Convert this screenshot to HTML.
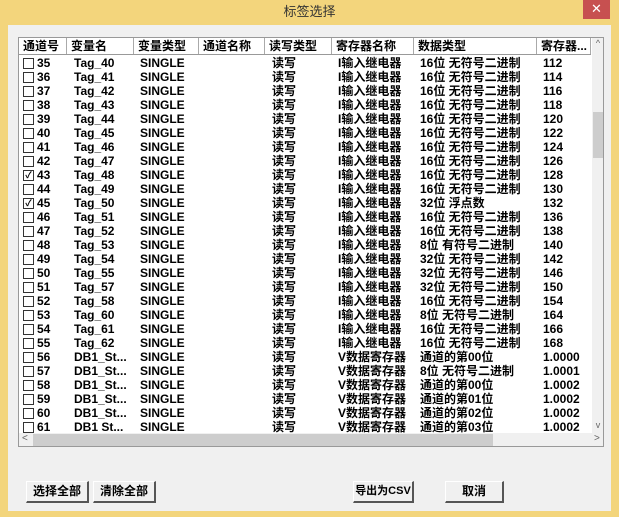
<!DOCTYPE html><html><head><meta charset="utf-8"><style>
body{margin:0;width:619px;height:517px;background:#f3d57c;font-family:"Liberation Sans","WenQuanYi Zen Hei","Noto Sans CJK SC",sans-serif;position:relative;overflow:hidden}
.title{position:absolute;left:0;top:0;width:619px;height:25px;text-align:center;line-height:24px;font-size:13px;color:#333}
.close{position:absolute;right:9px;top:0;width:27px;height:19px;background:#c75050;color:#fff;text-align:center;line-height:18px;font-size:13px}
.client{position:absolute;left:8px;top:25px;width:603px;height:486px;background:#f0f0f0}
.grid{position:absolute;left:18px;top:37px;width:586px;height:410px;background:#fff;border:1px solid #999;box-sizing:border-box;overflow:hidden}
.r{position:absolute;left:0;height:14px;font-size:12px;font-weight:bold;line-height:14px;white-space:nowrap;color:#000}
.r span{position:absolute;top:0}
.hd{top:0;height:16px;line-height:16px;width:572px;border-bottom:1px solid #999}
.hd span{height:16px;border-right:1px solid #aaa;padding-left:4px;box-sizing:border-box}
.cb{position:absolute;left:0;top:2px;width:9px;height:9px;border:1px solid #333;font-size:9px;line-height:9px;text-align:center;font-style:normal;overflow:hidden}
.vs{position:absolute;left:573px;top:0;width:12px;height:395px;background:#f0f0f0}
.th{position:absolute;left:1px;top:74px;width:11px;height:46px;background:#cdcdcd}
.hs{position:absolute;left:0;top:395px;width:585px;height:14px;background:#f0f0f0}
.hth{position:absolute;left:14px;top:1px;width:460px;height:12px;background:#cdcdcd}
.btn{position:absolute;top:481px;height:22px;background:#f0f0f0;border:1px solid #fff;border-right:2px solid #555;border-bottom:2px solid #555;box-sizing:border-box;font-size:12px;font-weight:bold;text-align:center;line-height:19px;white-space:nowrap}
</style></head><body>
<div class="title">标签选择</div><div class="close">✕</div>
<div class="client"></div>
<div class="grid">
<div class="r hd"><span style="left:0;width:48px">通道号</span><span style="left:48px;width:67px">变量名</span><span style="left:115px;width:65px">变量类型</span><span style="left:180px;width:66px">通道名称</span><span style="left:246px;width:67px">读写类型</span><span style="left:313px;width:82px">寄存器名称</span><span style="left:395px;width:123px">数据类型</span><span style="left:518px;width:54px">寄存器...</span></div>
<div id="rows"></div>
<div class="vs"><div style="font-size:9px;text-align:center;color:#666">^</div><div class="th"></div><div style="position:absolute;top:382px;width:12px;font-size:9px;text-align:center;color:#666">v</div></div>
<div class="hs"><span style="position:absolute;left:3px;font-size:10px;color:#666">&lt;</span><div class="hth"></div><span style="position:absolute;left:575px;font-size:10px;color:#666">&gt;</span></div>
</div>
<div class="btn" style="left:26px;width:63px">选择全部</div>
<div class="btn" style="left:93px;width:63px">清除全部</div>
<div class="btn" style="left:353px;width:61px;font-size:11px">导出为CSV</div>
<div class="btn" style="left:445px;width:59px">取消</div>
<script>
var d=[[35,"Tag_40","I","16位 无符号二进制","112"],[36,"Tag_41","I","16位 无符号二进制","114"],[37,"Tag_42","I","16位 无符号二进制","116"],[38,"Tag_43","I","16位 无符号二进制","118"],[39,"Tag_44","I","16位 无符号二进制","120"],[40,"Tag_45","I","16位 无符号二进制","122"],[41,"Tag_46","I","16位 无符号二进制","124"],[42,"Tag_47","I","16位 无符号二进制","126"],[43,"Tag_48","I","16位 无符号二进制","128",1],[44,"Tag_49","I","16位 无符号二进制","130"],[45,"Tag_50","I","32位 浮点数","132",1],[46,"Tag_51","I","16位 无符号二进制","136"],[47,"Tag_52","I","16位 无符号二进制","138"],[48,"Tag_53","I","8位 有符号二进制","140"],[49,"Tag_54","I","32位 无符号二进制","142"],[50,"Tag_55","I","32位 无符号二进制","146"],[51,"Tag_57","I","32位 无符号二进制","150"],[52,"Tag_58","I","16位 无符号二进制","154"],[53,"Tag_60","I","8位 无符号二进制","164"],[54,"Tag_61","I","16位 无符号二进制","166"],[55,"Tag_62","I","16位 无符号二进制","168"],[56,"DB1_St...","V","通道的第00位","1.0000"],[57,"DB1_St...","V","8位 无符号二进制","1.0001"],[58,"DB1_St...","V","通道的第00位","1.0002"],[59,"DB1_St...","V","通道的第01位","1.0002"],[60,"DB1_St...","V","通道的第02位","1.0002"],[61,"DB1 St...","V","通道的第03位","1.0002"]];
var h="";d.forEach(function(x,i){var reg=x[2]=="I"?"I输入继电器":"V数据寄存器";
h+='<div class="r" style="top:'+(18+i*14)+'px;width:572px"><span style="left:4px;width:40px"><i class="cb">'+(x[5]?"✓":"")+'</i><b style="position:absolute;left:14px">'+x[0]+'</b></span><span style="left:55px">'+x[1]+'</span><span style="left:121px">SINGLE</span><span style="left:253px">读写</span><span style="left:319px">'+reg+'</span><span style="left:401px">'+x[3]+'</span><span style="left:524px">'+x[4]+'</span></div>';});
document.getElementById("rows").innerHTML=h;
</script>
</body></html>
